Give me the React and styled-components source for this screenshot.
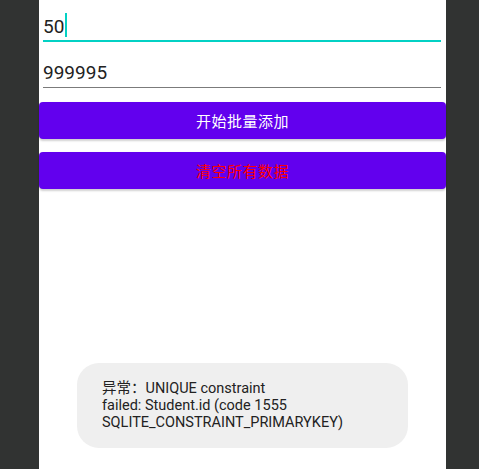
import styled, { createGlobalStyle } from "styled-components";

const Global = createGlobalStyle`
  html, body {
    margin: 0;
    padding: 0;
    background: #313332;
  }
  body {
    font-family: Roboto, "Noto Sans CJK SC", sans-serif;
  }
`;

const Screen = styled.div`
  display: flex;
  width: 479px;
  height: 469px;
  padding-left: 39px;
  box-sizing: border-box;
  background: #313332;
`;

const Column = styled.div`
  position: relative;
  width: 407px;
  height: 469px;
  background: #ffffff;
  display: flex;
  flex-direction: column;
`;

const Field = styled.div`
  display: flex;
  align-items: flex-end;
  height: ${(p) => p.$height}px;
  padding-bottom: ${(p) => p.$pad}px;
  box-sizing: border-box;
  margin: 0 5px 0 4px;
  border-bottom: ${(p) => (p.$focused ? "2px solid #03d1c4" : "1px solid #7b7b7b")};
  font-size: 19px;
  line-height: 19px;
  color: #222222;
`;

const Caret = styled.span`
  width: 2px;
  height: 24px;
  margin-left: 1px;
  margin-bottom: -1px;
  background: #03d1c4;
`;

const Button = styled.div`
  display: flex;
  align-items: center;
  justify-content: center;
  height: 37px;
  margin-top: ${(p) => p.$gap}px;
  border-radius: 4px;
  background: #6200ee;
  box-shadow: 0 2px 2px rgba(0, 0, 0, 0.18), 0 0 1px rgba(0, 0, 0, 0.1);
  color: ${(p) => p.$color};
  font-family: "Noto Sans CJK SC", Roboto, sans-serif;
  font-size: 15px;
  letter-spacing: 0.5px;
`;

const Toast = styled.div`
  position: absolute;
  left: 38px;
  bottom: 21px;
  width: 331px;
  height: 85px;
  box-sizing: border-box;
  padding: 16px 25px;
  display: flex;
  align-items: center;
  border-radius: 22px;
  background: #efefef;
  color: #222222;
  font-size: 14.5px;
  line-height: 17px;
`;

export default function App() {
  return (
    <>
      <Global />
      <Screen>
        <Column>
          <Field $height={42} $pad={4} $focused>
            <span>50</span>
            <Caret />
          </Field>
          <Field $height={46} $pad={5}>
            <span>999995</span>
          </Field>
          <Button $gap={14} $color="#ffffff">开始批量添加</Button>
          <Button $gap={13} $color="#ff0000">清空所有数据</Button>
          <Toast>
            <div>
              异常：UNIQUE constraint
              <br />
              failed: Student.id (code 1555
              <br />
              SQLITE_CONSTRAINT_PRIMARYKEY)
            </div>
          </Toast>
        </Column>
      </Screen>
    </>
  );
}
